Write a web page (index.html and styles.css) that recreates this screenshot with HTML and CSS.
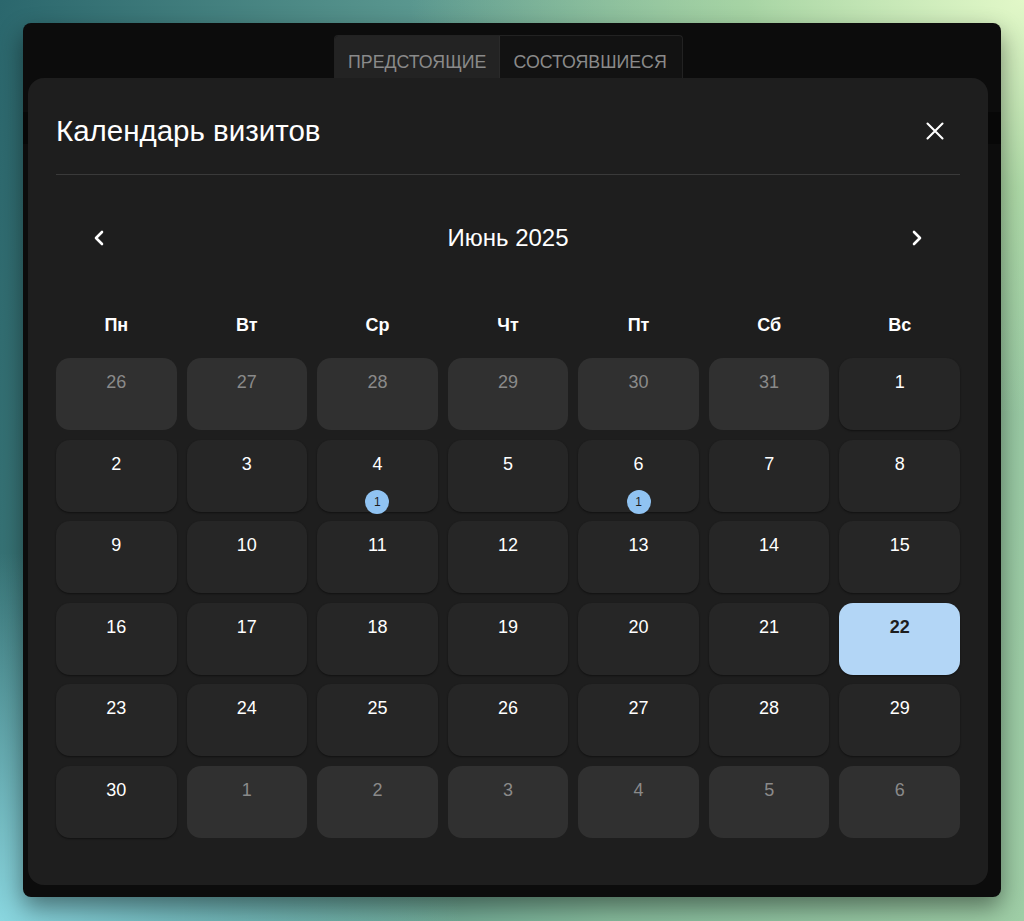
FILE: index.html
```html
<!DOCTYPE html>
<html lang="ru">
<head>
  <meta charset="UTF-8">
  <title>Календарь визитов</title>
  <link rel="stylesheet" href="styles.css">
</head>
<body>
  <div class="app">
    <div class="tabs">
      <button class="tab active">Предстоящие</button>
      <button class="tab">Состоявшиеся</button>
    </div>
    <div class="band"></div>

    <div class="modal">
      <div class="modal-header">
        <h2>Календарь визитов</h2>
        <button class="icon-btn close" aria-label="Закрыть">
          <svg width="18" height="18" viewBox="0 0 18 18"><path d="M1.5 1.5 L16.5 16.5 M16.5 1.5 L1.5 16.5" stroke="#fff" stroke-width="2.1" stroke-linecap="round"/></svg>
        </button>
      </div>

      <div class="month-nav">
        <button class="icon-btn" aria-label="Назад">
          <svg width="12" height="16" viewBox="0 0 12 16"><path d="M9 2 L3 8 L9 14" fill="none" stroke="#fff" stroke-width="2.6" stroke-linecap="round" stroke-linejoin="round"/></svg>
        </button>
        <span class="month-title">Июнь 2025</span>
        <button class="icon-btn" aria-label="Вперёд">
          <svg width="12" height="16" viewBox="0 0 12 16"><path d="M3 2 L9 8 L3 14" fill="none" stroke="#fff" stroke-width="2.6" stroke-linecap="round" stroke-linejoin="round"/></svg>
        </button>
      </div>

      <div class="weekdays">
        <span>Пн</span><span>Вт</span><span>Ср</span><span>Чт</span><span>Пт</span><span>Сб</span><span>Вс</span>
      </div>

      <div class="days" id="days"></div>
    </div>
  </div>

  <script>
    // June 2025 starts on a Sunday; grid runs Mon 26 May .. Sun 6 Jul
    const visits = { 4: 1, 6: 1 };
    const today = 22;
    const days = document.getElementById('days');

    function addDay(num, cls, count) {
      const cell = document.createElement('div');
      cell.className = 'day ' + cls;
      cell.innerHTML = `<span class="num">${num}</span>` +
        (count ? `<span class="badge">${count}</span>` : '');
      days.appendChild(cell);
    }

    for (let d = 26; d <= 31; d++) addDay(d, 'other');
    for (let d = 1; d <= 30; d++) addDay(d, d === today ? 'today' : '', visits[d]);
    for (let d = 1; d <= 6; d++) addDay(d, 'other');
  </script>
</body>
</html>
```

FILE: styles.css
```css
html, body {
  height: 100%;
}

body {
  margin: 0;
  font-family: 'Liberation Sans', Arial, sans-serif;
  color: #fff;
  background:
    radial-gradient(ellipse 60% 45% at 100% 0%, #e2f8c8 0%, rgba(190, 230, 170, 0.6) 45%, rgba(150, 200, 160, 0) 100%),
    radial-gradient(ellipse 45% 40% at 0% 100%, #8ad6df 0%, rgba(110, 190, 200, 0) 100%),
    linear-gradient(100deg, #2b676d 0%, #5a978f 35%, #86bb9c 65%, #9fcea6 100%);
  background-color: #4a8f90;
  overflow: hidden;
}

.app {
  position: relative;
  box-sizing: border-box;
  margin: 23px 23px 0 23px;
  height: 874px;
  background: #0c0c0c;
  border-radius: 8px;
  box-shadow: 0 10px 24px rgba(0, 0, 0, 0.45);
  padding-top: 12px;
}

.tabs {
  display: flex;
  width: 347px;
  margin-left: 311px;
  border: 1px solid #222;
  border-bottom: none;
  border-radius: 4px 4px 0 0;
  overflow: hidden;
  background: #121212;
}

.tab {
  height: 43px;
  padding: 10px 13px 0;
  border: none;
  background: transparent;
  color: #8a8a8a;
  font-family: inherit;
  font-size: 17.8px;
  text-transform: uppercase;
}

.tab.active {
  background: #232323;
  border-right: 1px solid #2a2a2a;
}

.band {
  height: 32px;
  margin-top: 33px;
  background: #070707;
}

.modal {
  position: absolute;
  left: 5px;
  top: 55px;
  width: 960px;
  height: 807px;
  box-sizing: border-box;
  padding: 0 28px;
  background: #1e1e1e;
  border-radius: 16px;
}

.modal-header {
  display: flex;
  align-items: center;
  justify-content: space-between;
  padding: 33px 0 23px;
  border-bottom: 1px solid #3a3a3a;
}

.modal-header h2 {
  margin: 0;
  font-size: 29.5px;
  font-weight: 400;
  line-height: 34px;
}

.icon-btn {
  display: flex;
  align-items: center;
  justify-content: center;
  width: 40px;
  height: 40px;
  padding: 0;
  border: none;
  background: transparent;
  cursor: pointer;
}

.close {
  margin-right: 5px;
}

.month-nav {
  display: flex;
  align-items: center;
  justify-content: space-between;
  height: 44px;
  margin-top: 41px;
  padding: 0 23px 0 23px;
}

.month-title {
  font-size: 24px;
  line-height: 28px;
}

.weekdays {
  display: grid;
  grid-template-columns: repeat(7, 1fr);
  column-gap: 10px;
  margin-top: 54px;
  font-size: 18px;
  font-weight: 700;
  text-align: center;
  line-height: 22px;
}

.days {
  display: grid;
  grid-template-columns: repeat(7, 1fr);
  grid-auto-rows: 72px;
  gap: 9.6px 10px;
  margin-top: 22px;
}

.day {
  position: relative;
  background: #262626;
  border-radius: 14px;
  box-shadow: 0 1px 2px rgba(0, 0, 0, 0.45);
  text-align: center;
  font-size: 18px;
}

.day .num {
  display: block;
  padding-top: 14px;
  line-height: 20px;
}

.day.other {
  background: #303030;
  color: #8a8a8a;
  box-shadow: none;
}

.day.today {
  background: #b3d6f6;
  color: #1e1e1e;
  font-weight: 700;
}

.badge {
  position: absolute;
  left: 50%;
  bottom: -2px;
  width: 24px;
  height: 24px;
  margin-left: -12px;
  border-radius: 50%;
  background: #90c3f2;
  color: #1e1e1e;
  font-size: 12px;
  line-height: 24px;
}
```
